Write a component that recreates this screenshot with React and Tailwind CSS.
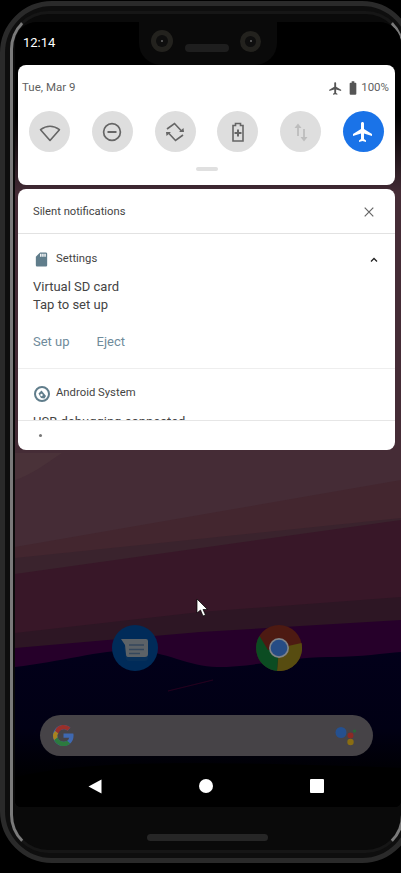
const PLANE = "M21 16v-2l-8-5V3.5c0-.83-.67-1.5-1.5-1.5S10 2.67 10 3.5V9l-8 5v2l8-2.5V19l-2 1.5V22l3.5-1 3.5 1v-1.5L13 19v-5.5l8 2.5z";

function Wallpaper() {
  return (
    <svg className="absolute inset-0" width="386" height="785" viewBox="15 22 386 785">
      <defs>
        <linearGradient id="top" x1="0" y1="0" x2="0" y2="1">
          <stop offset="0" stopColor="#000" />
          <stop offset="0.55" stopColor="#000" />
          <stop offset="1" stopColor="#412a34" />
        </linearGradient>
        <linearGradient id="low" x1="0" y1="0" x2="0" y2="1">
          <stop offset="0" stopColor="#02001a" />
          <stop offset="0.6" stopColor="#010014" />
          <stop offset="1" stopColor="#000" />
        </linearGradient>
      </defs>
      <rect x="15" y="22" width="386" height="170" fill="url(#top)" />
      <rect x="15" y="190" width="386" height="400" fill="#452c36" />
      <path d="M15 480 C30 476 48 462 62 453 L15 453 Z" fill="#4a3239" />
      <path d="M15 547 L401 480 V600 H15 Z" fill="#43262f" />
      <path d="M15 558 L401 518 V600 H15 Z" fill="#3a232d" />
      <path d="M15 574 L401 520 V640 H15 Z" fill="#381728" />
      <path d="M15 633 L200 612 L401 597 V700 H15 Z" fill="#2d1624" />
      <path d="M15 648 L200 632 L401 620 V700 H15 Z" fill="#26002a" />
      <path d="M15 667 C60 662 100 650 133 650 C165 651 190 667 217 667 C255 667 295 656 333 657 C360 657 385 653 401 652 V780 H15 Z" fill="url(#low)" />
      <path d="M168 691 L213 680 L172 690 Z" fill="#2a0020" stroke="#2a0020" strokeWidth="0.6" />
      <path d="M15 778 C50 768 90 766 130 764 C200 762 300 764 401 768 V807 H15 Z" fill="#000" />
    </svg>
  );
}

function Notch() {
  return (
    <div className="absolute left-[124px] top-0 w-[138px] h-[43px] rounded-b-[22px] bg-[#0a0a0a]">
      <div className="absolute left-[12px] top-[8px] w-[22px] h-[22px] rounded-full bg-[#23221e] p-[5px]">
        <div className="relative w-[12px] h-[12px] rounded-full bg-[#0e0e0e]">
          <div className="absolute left-[5px] top-[5px] w-[2px] h-[2px] rounded-full bg-[#6a6a6a]" />
        </div>
      </div>
      <div className="absolute left-[46px] top-[22px] w-[44px] h-[8px] rounded-full bg-[#1e1e1e]" />
      <div className="absolute left-[101px] top-[9px] w-[21px] h-[21px] rounded-full bg-[#23221e] p-[5px]">
        <div className="relative w-[11px] h-[11px] rounded-full bg-[#0e0e0e]">
          <div className="absolute left-[5px] top-[4px] w-[2px] h-[2px] rounded-full bg-[#6a6a6a]" />
        </div>
      </div>
    </div>
  );
}

function QuickButton({ active, children }) {
  return (
    <div className={`w-[41px] h-[41px] rounded-full flex items-center justify-center ${active ? "bg-[#1a73e8]" : "bg-[#dedede]"}`}>
      <svg width="24" height="24" viewBox="0 0 24 24">{children}</svg>
    </div>
  );
}

function QuickPanel() {
  return (
    <div className="ml-[3px] w-[377px] h-[120px] rounded-lg bg-white flex flex-col">
      <div className="flex items-center justify-between h-[46px] pl-[4px] pr-[6px] text-[11.5px] text-[#5f5f5f]">
        <span>Tue, Mar 9</span>
        <div className="flex items-center">
          <svg width="15" height="15" viewBox="0 0 24 24" fill="#555"><path d={PLANE} /></svg>
          <svg className="ml-[2px]" width="16" height="16" viewBox="0 0 24 24" fill="#555">
            <path d="M15.67 4H14V2h-4v2H8.33C7.6 4 7 4.6 7 5.33v15.33C7 21.4 7.6 22 8.33 22h7.33c.74 0 1.34-.6 1.34-1.33V5.33C17 4.6 16.4 4 15.67 4z" />
          </svg>
          <span>100%</span>
        </div>
      </div>
      <div className="flex justify-between px-[11px]">
        <QuickButton>
          <path d="M1.5 9 C8 4 16 4 22.5 9 L12 21 Z" transform="translate(1.2 1.6) scale(0.9)" fill="none" stroke="#666" strokeWidth="1.8" strokeLinejoin="round" />
        </QuickButton>
        <QuickButton>
          <circle cx="12" cy="12" r="8.4" fill="none" stroke="#666" strokeWidth="1.7" />
          <path d="M7.5 12 H16.5" stroke="#666" strokeWidth="1.8" />
        </QuickButton>
        <QuickButton>
          <path d="M4 9 L11.5 3.5 L18.5 11" fill="none" stroke="#666" strokeWidth="1.6" />
          <path d="M20 15 L12.5 20.5 L5.500 13" fill="none" stroke="#666" strokeWidth="1.6" />
          <path d="M16 12 H21 L20.500 8 Z" fill="#666" />
          <path d="M8 12 H3 L3.500 16 Z" fill="#666" />
        </QuickButton>
        <QuickButton>
          <path d="M9.5 3.5 H14.5 V5.5 H17 V21 H7 V5.5 H9.5 Z" fill="none" stroke="#666" strokeWidth="1.6" />
          <path d="M12 9.5 V16.5 M8.5 13 H15.5" stroke="#666" strokeWidth="2" />
        </QuickButton>
        <QuickButton>
          <path d="M9 16 V7" stroke="#bdbdbd" strokeWidth="1.8" />
          <path d="M5.5 8 L9 3.5 L12.5 8 Z" fill="#bdbdbd" />
          <path d="M15 9 V18" stroke="#bdbdbd" strokeWidth="1.8" />
          <path d="M11.5 17 L15 21.5 L18.5 17 Z" fill="#bdbdbd" />
        </QuickButton>
        <QuickButton active>
          <path d={PLANE} fill="#fff" />
        </QuickButton>
      </div>
      <div className="mx-auto mt-[15px] w-[22px] h-[4px] rounded-full bg-[#e0e0e0]" />
    </div>
  );
}

function NotificationCard() {
  return (
    <div className="ml-[3px] mt-[4px] w-[377px] h-[261px] rounded-lg bg-white flex flex-col overflow-hidden">
      <div className="flex items-center justify-between h-[45px] pt-[2px] pl-[15px] pr-[21px] border-b border-[#e2e2e2] text-[11.2px] text-[#444]">
        <span>Silent notifications</span>
        <svg width="10" height="10" viewBox="0 0 10 10">
          <path d="M0.7 0.7 L9.3 9.3 M9.3 0.7 L0.7 9.3" stroke="#666" strokeWidth="1.2" />
        </svg>
      </div>
      <div className="h-[187px] overflow-hidden border-b border-[#e6e6e6]">
        <div className="h-[135px] pt-[17px] pl-[15px] border-b border-[#eeeeee]">
          <div className="flex items-center h-[17px] text-[11.3px] text-[#444]">
            <svg className="-ml-[0.5px]" width="17" height="17" viewBox="0 0 24 24" fill="#607d8b">
              <path d="M18 2h-8L4.02 8 4 20c0 1.1.9 2 2 2h12c1.1 0 2-.9 2-2V4c0-1.1-.9-2-2-2zm-6 6h-2V4h2v4zm3 0h-2V4h2v4zm3 0h-2V4h2v4z" />
            </svg>
            <span className="ml-[6.5px]">Settings</span>
            <svg className="ml-auto mr-[17px]" width="8" height="6" viewBox="0 0 8 6">
              <path d="M1 4.5 L4 1.5 L7 4.5" fill="none" stroke="#222" strokeWidth="1.3" />
            </svg>
          </div>
          <div className="mt-[10px] text-[13px] leading-[18px] text-[#444]">
            <div>Virtual SD card</div>
            <div>Tap to set up</div>
          </div>
          <div className="flex gap-[27px] mt-[19px] text-[13px] leading-[18px] text-[#6f8b9b]">
            <span>Set up</span>
            <span>Eject</span>
          </div>
        </div>
        <div className="pt-[16px] pl-[15px]">
          <div className="flex items-center h-[17px] text-[11.3px] text-[#444]">
            <svg width="18" height="18" viewBox="0 0 18 18">
              <circle cx="9" cy="9" r="7" fill="none" stroke="#607d8b" strokeWidth="2" />
              <path d="M5.5 8.5 L8.5 5.5 L13 11 L11.5 13.5 L8 13 Z" fill="#607d8b" />
              <circle cx="8.5" cy="10" r="1.2" fill="#fff" />
            </svg>
            <span className="ml-[5px]">Android System</span>
          </div>
          <div className="mt-[11px] text-[13px] leading-[18px] text-[#444]">USB debugging connected</div>
        </div>
      </div>
      <div className="pl-[21px] pt-[13px]">
        <div className="w-[3px] h-[3px] rounded-full bg-[#777]" />
      </div>
    </div>
  );
}

function Dock() {
  return (
    <div className="flex gap-[98px] ml-[97px] mt-[175px]">
      <svg width="46" height="46" viewBox="0 0 46 46">
        <circle cx="23" cy="23" r="23" fill="#002b59" />
        <path d="M12 22 H36 V33 Q36 36 33 36 H17 Q14 36 14 33 Z" fill="#07305a" />
        <path d="M9 14 H34 Q36 14 36 16 V29 Q36 32 33 32 H16 Q14 32 14 29 L13 20 Z" fill="#5c6267" />
        <path d="M17 20 H32 M17 24.5 H32 M17 28.5 H28" stroke="#34475c" strokeWidth="1.7" />
      </svg>
      <svg width="46" height="46" viewBox="0 0 46 46">
        <circle cx="23" cy="23" r="23" fill="#4d1a12" />
        <path d="M23 23 L45.5 18 A23 23 0 0 1 21 46 Z" fill="#574c10" />
        <path d="M23 23 L21 46 A23 23 0 0 1 3.5 11 L12 25 Z" fill="#0b4c22" />
        <circle cx="23" cy="23" r="10" fill="#7f8388" />
        <circle cx="23" cy="23" r="8.300" fill="#264c85" />
      </svg>
    </div>
  );
}

function SearchBar() {
  return (
    <div className="flex items-center justify-between ml-[25px] mt-[44px] w-[333px] h-[41px] rounded-full bg-[#464347] pl-[12px] pr-[17px]">
      <svg width="23" height="23" viewBox="0 0 48 48">
        <path d="M44.5 20H24v8.5h11.8C34.7 33.9 30.1 37 24 37c-7.2 0-13-5.8-13-13s5.8-13 13-13c3.1 0 5.9 1.1 8.1 2.9l6.4-6.4C34.6 4.1 29.6 2 24 2 11.8 2 2 11.8 2 24s9.8 22 22 22c11 0 21-8 21-22 0-1.3-.2-2.7-.5-4z" fill="#3f68b0" />
        <path d="M6.3 14.7l7 5.1C15.2 15.1 19.3 11 24 11c3.1 0 5.9 1.1 8.1 2.9l6.4-6.4C34.6 4.1 29.6 2 24 2 15.6 2 8.4 6.7 6.3 14.7z" fill="#99302a" />
        <path d="M24 46c5.5 0 10.5-1.9 14.2-5.4l-6.8-5.6C29.5 36.3 27 37 24 37c-6 0-10.7-3.9-12.4-9.2l-7.1 5.5C7.9 40.7 15.4 46 24 46z" fill="#2c7a3e" />
        <path d="M13.3 19.8l-7-5.1C3.6 18 2 21 2 24s1 6.500 2.500 9.300l7.100-5.500C11.200 26.700 11 25.400 11 24s.9-3 2.300-4.200z" fill="#a8821e" />
      </svg>
      <svg width="21" height="20" viewBox="0 0 21 20">
        <circle cx="6" cy="6.500" r="5.500" fill="#25508f" />
        <circle cx="15.500" cy="9.500" r="3" fill="#8b2a25" />
        <circle cx="15.500" cy="16" r="3.200" fill="#8a6d12" />
        <circle cx="19.500" cy="5" r="1.500" fill="#246b36" />
      </svg>
    </div>
  );
}

function NavBar() {
  return (
    <div className="flex items-center gap-[97px] ml-[73px] mt-[23px] h-[14px]">
      <svg width="14" height="15" viewBox="0 0 14 15"><path d="M0.500 7.500 L13.500 0.500 V14.500 Z" fill="#fff" /></svg>
      <div className="w-[14px] h-[14px] rounded-full bg-white" />
      <div className="w-[14px] h-[14px] rounded-[1px] bg-white" />
    </div>
  );
}

export default function App() {
  return (
    <div className="relative w-[401px] h-[873px] overflow-hidden bg-black pt-px" style={{ fontFamily: "Roboto, sans-serif" }}>
      <div className="w-[414px] h-[862px] rounded-[52px] border-[5px] border-[#2a2a2a] bg-[#0e0e0e] p-[5px]">
        <div className="h-full flex flex-col rounded-[38px] border-[3px] border-t-[#161616] border-b-[#161616] border-l-[#7a7a7a] border-r-[#7a7a7a] bg-[#0a0a0a] pl-[2px] pt-[8px]">
          <div className="relative w-[386px] h-[785px] shrink-0 rounded-t-[22px] rounded-b-[6px] overflow-hidden bg-black">
            <Wallpaper />
            <Notch />
            <div className="relative">
              <div className="h-[43px] pl-[8px] pt-[12px] text-[13px] leading-[18px] text-white">12:14</div>
              <QuickPanel />
              <NotificationCard />
              <Dock />
              <SearchBar />
              <NavBar />
            </div>
          </div>
          <div className="ml-[132px] mt-[27px] w-[121px] h-[7px] rounded-full bg-[#262626]" />
        </div>
      </div>
      <svg className="absolute left-[196px] top-[598px]" width="13" height="20" viewBox="0 0 13 20">
        <path d="M1 1 V15 L4.500 12 L7 18 L9.500 17 L7 11.500 H11.500 Z" fill="#fff" stroke="#000" strokeWidth="0.7" />
      </svg>
    </div>
  );
}
